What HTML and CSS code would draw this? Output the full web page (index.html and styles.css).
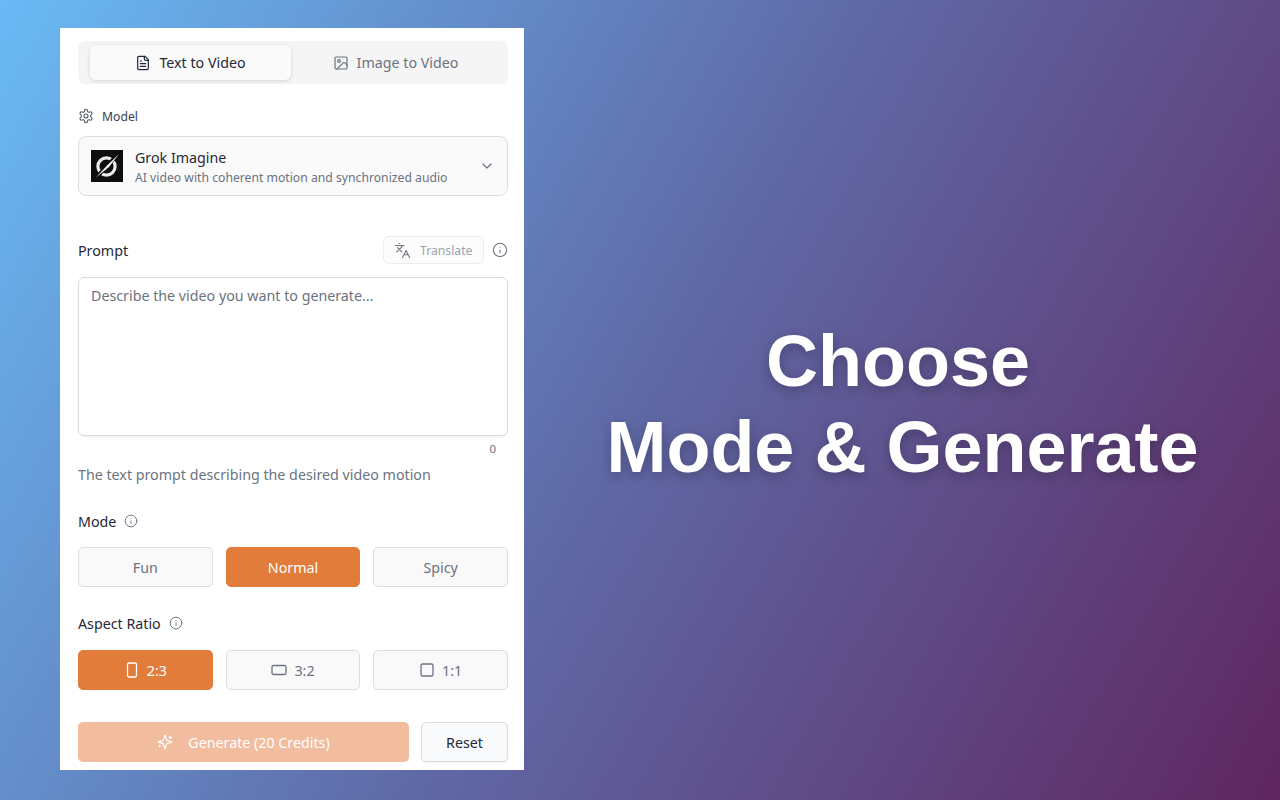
FILE: index.html
```html
<!DOCTYPE html>
<html lang="en">
  <head>
    <meta charset="UTF-8" />
    <meta name="viewport" content="width=device-width, initial-scale=1.0" />
    <title>Choose Mode &amp; Generate</title>
    <link rel="stylesheet" href="styles.css">
  </head>

  <body>
    <main class="panel">
      <div class="tabs">
        <div class="tab active">
          <svg class="icon" width="16" height="16" viewBox="0 0 24 24"><path d="M15 2H6a2 2 0 0 0-2 2v16a2 2 0 0 0 2 2h12a2 2 0 0 0 2-2V7Z"/><path d="M14 2v4a2 2 0 0 0 2 2h4"/><path d="M8 13h8M8 17h8M8 9h2"/></svg>
          <span>Text to Video</span>
        </div>
        <div class="tab">
          <svg class="icon" width="16" height="16" viewBox="0 0 24 24"><rect x="3" y="3" width="18" height="18" rx="2"/><circle cx="9" cy="9" r="2"/><path d="m21 15-3.1-3.1a2 2 0 0 0-2.8 0L6 21"/></svg>
          <span>Image to Video</span>
        </div>
      </div>

      <div class="model-label">
        <svg class="icon" width="16" height="16" viewBox="0 0 24 24"><path d="M12.22 2h-.44a2 2 0 0 0-2 2v.18a2 2 0 0 1-1 1.73l-.43.25a2 2 0 0 1-2 0l-.15-.08a2 2 0 0 0-2.73.73l-.22.38a2 2 0 0 0 .73 2.73l.15.1a2 2 0 0 1 1 1.72v.51a2 2 0 0 1-1 1.74l-.15.09a2 2 0 0 0-.73 2.73l.22.38a2 2 0 0 0 2.73.73l.15-.08a2 2 0 0 1 2 0l.43.25a2 2 0 0 1 1 1.73V20a2 2 0 0 0 2 2h.44a2 2 0 0 0 2-2v-.18a2 2 0 0 1 1-1.73l.43-.25a2 2 0 0 1 2 0l.15.08a2 2 0 0 0 2.73-.73l.22-.39a2 2 0 0 0-.73-2.73l-.15-.08a2 2 0 0 1-1-1.74v-.5a2 2 0 0 1 1-1.74l.15-.09a2 2 0 0 0 .73-2.73l-.22-.38a2 2 0 0 0-2.73-.73l-.15.08a2 2 0 0 1-2 0l-.43-.25a2 2 0 0 1-1-1.73V4a2 2 0 0 0-2-2z"/><circle cx="12" cy="12" r="3"/></svg>
        <span>Model</span>
      </div>

      <div class="select">
        <svg class="logo" width="32" height="32" viewBox="0 0 32 32">
          <rect width="32" height="32" fill="#0e0e0e"/>
          <circle cx="15.5" cy="16.5" r="8.6" fill="none" stroke="#ececec" stroke-width="3.2"/>
          <path d="M29 2 L3 30" fill="none" stroke="#0e0e0e" stroke-width="4"/>
          <path d="M28 4 L16 15.5 L5 27.5 L18 17 Z" fill="#f4f4f4"/>
        </svg>
        <div class="select-text">
          <span class="select-title">Grok Imagine</span>
          <span class="select-sub">AI video with coherent motion and synchronized audio</span>
        </div>
        <svg class="icon chevron" width="16" height="16" viewBox="0 0 24 24"><path d="m6 9 6 6 6-6"/></svg>
      </div>

      <div class="prompt-head">
        <span class="label">Prompt</span>
        <div class="translate">
          <svg class="icon" width="17" height="17" viewBox="0 0 24 24"><path d="m5 8 6 6M4 14l6-6 2-3M2 5h12M7 2h1M22 22l-5-10-5 10M14 18h6"/></svg>
          <span>Translate</span>
        </div>
        <svg class="icon info-big" width="16" height="16" viewBox="0 0 24 24"><circle cx="12" cy="12" r="10"/><path d="M12 16v-4M12 8h.01"/></svg>
      </div>

      <div class="textarea">Describe the video you want to generate...</div>
      <div class="counter">0</div>
      <p class="help">The text prompt describing the desired video motion</p>

      <div class="field-label mode-label">
        <span class="label">Mode</span>
        <svg class="icon" width="14" height="14" viewBox="0 0 24 24"><circle cx="12" cy="12" r="10"/><path d="M12 16v-4M12 8h.01"/></svg>
      </div>
      <div class="options">
        <div class="option">Fun</div>
        <div class="option selected">Normal</div>
        <div class="option">Spicy</div>
      </div>

      <div class="field-label ratio-label">
        <span class="label">Aspect Ratio</span>
        <svg class="icon" width="14" height="14" viewBox="0 0 24 24"><circle cx="12" cy="12" r="10"/><path d="M12 16v-4M12 8h.01"/></svg>
      </div>
      <div class="options ratio-options">
        <div class="option selected">
          <svg class="icon" width="16" height="16" viewBox="0 0 16 16"><rect x="3.5" y="1" width="9" height="14" rx="1.6" stroke-width="1.3"/></svg>
          <span>2:3</span>
        </div>
        <div class="option">
          <svg class="icon" width="16" height="16" viewBox="0 0 16 16"><rect x="1" y="3.5" width="14" height="9" rx="1.6" stroke-width="1.3"/></svg>
          <span>3:2</span>
        </div>
        <div class="option">
          <svg class="icon" width="16" height="16" viewBox="0 0 16 16"><rect x="2" y="2" width="12" height="12" rx="1.6" stroke-width="1.3"/></svg>
          <span>1:1</span>
        </div>
      </div>

      <div class="actions">
        <div class="generate">
          <svg class="icon" width="16" height="16" viewBox="0 0 24 24"><path d="M9.9 15.5A2 2 0 0 0 8.5 14.1l-6.1-1.6a.5.5 0 0 1 0-1l6.1-1.6A2 2 0 0 0 9.9 8.5l1.6-6.1a.5.5 0 0 1 1 0l1.6 6.1a2 2 0 0 0 1.4 1.4l6.1 1.6a.5.5 0 0 1 0 1l-6.1 1.6a2 2 0 0 0-1.4 1.4l-1.6 6.1a.5.5 0 0 1-1 0Z"/><path d="M20 3v4M22 5h-4M4 17v2M5 18H3"/></svg>
          <span>Generate (20 Credits)</span>
        </div>
        <div class="reset">Reset</div>
      </div>
    </main>

    <h1 class="headline"><span class="headline-top">Choose</span><br />Mode &amp; Generate</h1>
  </body>
</html>
```

FILE: styles.css
```css
html,
body {
  height: 100%;
}

body {
  margin: 0;
  box-sizing: border-box;
  height: 800px;
  overflow: hidden;
  padding: 28px 0 30px 60px;
  display: flex;
  background: linear-gradient(120deg, #69baf5 0%, #5f69a6 50%, #5f2660 100%);
  font-family: "Noto Sans", sans-serif;
  color: #1f2937;
}

.icon {
  fill: none;
  stroke: currentColor;
  stroke-width: 1.8;
  stroke-linecap: round;
  stroke-linejoin: round;
  flex-shrink: 0;
}

.panel {
  width: 464px;
  box-sizing: border-box;
  background-color: #fff;
  padding: 13px 16px 0 18px;
}

.tabs {
  display: flex;
  gap: 4px;
  height: 43px;
  box-sizing: border-box;
  padding: 4px 12px;
  background-color: #f5f5f5;
  border-radius: 8px;
}

.tab {
  flex: 1;
  display: flex;
  align-items: center;
  justify-content: center;
  gap: 8px;
  height: 35px;
  font-size: 14.25px;
  color: #6b7280;
  border-radius: 6px;
}

.tab.active {
  background-color: #fafafa;
  color: #1f2937;
  box-shadow: 0 1px 4px rgba(0, 0, 0, 0.14);
}

.model-label {
  display: flex;
  align-items: center;
  gap: 8px;
  height: 20px;
  margin-top: 22px;
  font-size: 12.2px;
  color: #374151;
}

.model-label .icon {
  color: #4b5563;
  stroke-width: 1.6;
}

.select {
  display: flex;
  align-items: center;
  gap: 12px;
  height: 60px;
  box-sizing: border-box;
  margin-top: 10px;
  padding: 0 12px;
  background-color: #fafafa;
  border: 1px solid #dcdde0;
  border-radius: 8px;
}

.select-text {
  flex: 1;
  display: flex;
  flex-direction: column;
  gap: 1px;
  padding-top: 2px;
}

.select-title {
  font-size: 14.25px;
  line-height: 20px;
  color: #1f2937;
}

.select-sub {
  font-size: 12.2px;
  line-height: 18px;
  color: #6b7280;
}

.chevron {
  color: #6b7280;
}

.prompt-head {
  display: flex;
  align-items: center;
  height: 28px;
  margin-top: 40px;
}

.label {
  font-size: 14.25px;
  color: #1f2937;
}

.prompt-head .label {
  flex: 1;
}

.translate {
  display: flex;
  align-items: center;
  gap: 9px;
  width: 101px;
  height: 28px;
  box-sizing: border-box;
  padding-left: 10px;
  font-size: 12.2px;
  color: #9ca3af;
  background-color: #fcfcfc;
  border: 1px solid #ececee;
  border-radius: 6px;
}

.translate .icon {
  color: #6b7280;
  stroke-width: 1.5;
}

.info-big {
  margin-left: 8px;
  color: #6b7280;
  stroke-width: 1.6;
}

.textarea {
  height: 159px;
  box-sizing: border-box;
  margin-top: 13px;
  padding: 8px 12px;
  font-size: 14.25px;
  line-height: 20px;
  color: #6b7280;
  border: 1px solid #d9dadd;
  border-radius: 6px;
  box-shadow: 0 1px 2px rgba(0, 0, 0, 0.06);
}

.counter {
  margin-top: 5px;
  padding-right: 12px;
  text-align: right;
  font-size: 11.5px;
  line-height: 16px;
  color: #6b7280;
}

.help {
  margin: 8px 0 0;
  font-size: 14.25px;
  line-height: 20px;
  color: #6b7280;
}

.field-label {
  display: flex;
  align-items: center;
  gap: 8px;
  height: 20px;
}

.field-label .icon {
  color: #6b7280;
  stroke-width: 1.6;
}

.mode-label {
  margin-top: 26px;
}

.ratio-label {
  margin-top: 26px;
}

.options {
  display: grid;
  grid-template-columns: 1fr 1fr 1fr;
  gap: 13px;
  margin-top: 16px;
}

.ratio-options {
  margin-top: 17px;
}

.option {
  display: flex;
  align-items: center;
  justify-content: center;
  gap: 7px;
  height: 40px;
  box-sizing: border-box;
  font-size: 14.25px;
  color: #6b7280;
  background-color: #f9f9f9;
  border: 1px solid #dcdde0;
  border-radius: 5px;
}

.option.selected {
  background-color: #e27c3a;
  border-color: #e27c3a;
  color: #fff;
}

.actions {
  display: flex;
  gap: 12px;
  margin-top: 32px;
}

.generate {
  flex: 1;
  display: flex;
  align-items: center;
  justify-content: center;
  gap: 15px;
  height: 40px;
  font-size: 14.25px;
  color: #fff;
  background-color: #f2bc9f;
  border-radius: 5px;
}

.reset {
  display: flex;
  align-items: center;
  justify-content: center;
  width: 87px;
  height: 40px;
  box-sizing: border-box;
  font-size: 14.25px;
  color: #1f2937;
  background-color: #f9fafb;
  border: 1px solid #dcdde0;
  border-radius: 5px;
  box-shadow: 0 1px 2px rgba(0, 0, 0, 0.06);
}

.headline {
  flex: 1;
  margin: 0;
  padding: 290px 0 0 1px;
  text-align: center;
  font-family: "Liberation Sans", Arial, sans-serif;
  font-size: 72px;
  line-height: 86px;
  font-weight: 700;
  color: #fff;
  text-shadow: 0 4px 12px rgba(0, 0, 0, 0.25);
}

.headline-top {
  padding-right: 9px;
}
```
